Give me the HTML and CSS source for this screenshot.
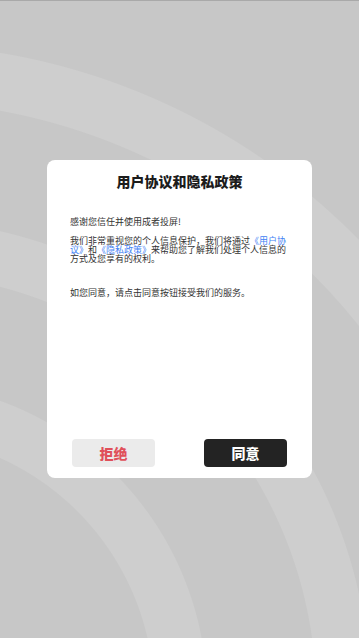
FILE: index.html
```html
<!DOCTYPE html>
<html lang="zh-CN">
<head>
<meta charset="utf-8">
<title>用户协议和隐私政策</title>
<link rel="stylesheet" href="styles.css">
</head>
<body>
<div class="screen">
  <div class="dialog">
    <h1 class="dialog-title">用户协议和隐私政策</h1>
    <p class="text text-first">感谢您信任并使用成者投屏!</p>
    <p class="text text-second">我们非常重视您的个人信息保护，我们将通过<a class="link">《用户协议》</a>和<a class="link">《隐私政策》</a>来帮助您了解我们处理个人信息的方式及您享有的权利。</p>
    <p class="text text-third">如您同意，请点击同意按钮接受我们的服务。</p>
    <div class="actions">
      <button class="btn btn-reject">拒绝</button>
      <button class="btn btn-agree">同意</button>
    </div>
  </div>
</div>
</body>
</html>
```

FILE: styles.css
```css
html, body {
  margin: 0;
  padding: 0;
}

body {
  font-family: "Noto Sans CJK SC", "Noto Sans", sans-serif;
}

.screen {
  width: 359px;
  height: 638px;
  display: flex;
  align-items: center;
  justify-content: center;
  box-shadow: inset 0 1px 0 #a9a9a9;
  background: radial-gradient(circle at -107px 696px,
    #c7c7c7 0,
    #c7c7c7 260.5px, #cecece 261.5px,
    #cecece 313.5px, #c7c7c7 314.5px,
    #c7c7c7 422.5px, #cecece 423.5px,
    #cecece 476.5px, #c7c7c7 477.5px,
    #c7c7c7 594.5px, #cecece 595.5px,
    #cecece 651.5px, #c7c7c7 652.5px);
}

.dialog {
  box-sizing: border-box;
  width: 265px;
  height: 318px;
  background: #ffffff;
  border-radius: 8px;
  padding: 10px 23px 11px 23px;
  display: flex;
  flex-direction: column;
}

.dialog-title {
  margin: 0;
  font-size: 14px;
  line-height: 22px;
  font-weight: 900;
  color: #1c1c1c;
  text-align: center;
}

.text {
  margin: 0;
  font-size: 9px;
  line-height: 9px;
  color: #333333;
  text-spacing-trim: space-all;
}

.text-first {
  margin-top: 25px;
}

.text-second {
  margin-top: 10px;
}

.text-third {
  margin-top: 25px;
}

.link {
  color: #3f82f4;
  text-decoration: none;
}

.actions {
  margin-top: auto;
  display: flex;
  justify-content: space-between;
  padding: 0 2px;
}

.btn {
  width: 83px;
  height: 28px;
  border: none;
  border-radius: 4px;
  font-family: "Noto Sans CJK SC", "Noto Sans", sans-serif;
  font-size: 14px;
  font-weight: 900;
  padding: 0;
  line-height: 28px;
}

.btn-reject {
  background: #ebebeb;
  color: #e0505a;
}

.btn-agree {
  background: #232323;
  color: #ffffff;
}
```
